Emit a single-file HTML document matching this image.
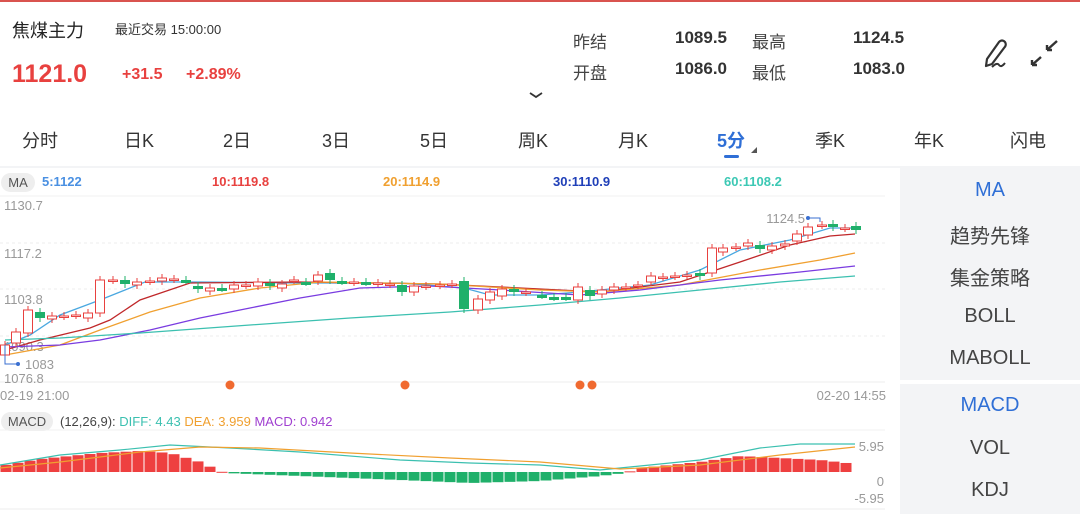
<!DOCTYPE html>
<html><head><meta charset="utf-8"><style>
*{margin:0;padding:0;box-sizing:border-box}
body{width:1080px;height:514px;overflow:hidden;background:#fff;font-family:"Liberation Sans","Noto Sans CJK SC",sans-serif;position:relative;color:#333}
.a{position:absolute;white-space:nowrap}
.r{color:#e8413f}
.b{font-weight:bold}
.tab{position:absolute;top:127px;font-size:18px;color:#333;transform:translateX(-50%)}
.side{position:absolute;left:900px;width:180px;text-align:center;font-size:20px;color:#444}
</style></head><body>
<div class="a" style="left:0;top:0;width:1080px;height:2px;background:#d9534f"></div>
<div class="a" style="left:12px;top:17px;font-size:18px;color:#222">焦煤主力</div>
<div class="a" style="left:115px;top:19px;font-size:13px;color:#333">最近交易 15:00:00</div>
<div class="a r b" style="left:12px;top:60px;font-size:25px">1121.0</div>
<div class="a r b" style="left:122px;top:66px;font-size:16px">+31.5</div>
<div class="a r b" style="left:186px;top:66px;font-size:16px">+2.89%</div>
<div class="a" style="left:573px;top:28px;font-size:17px;color:#444">昨结</div>
<div class="a b" style="left:675px;top:28px;font-size:17px;color:#333">1089.5</div>
<div class="a" style="left:752px;top:28px;font-size:17px;color:#444">最高</div>
<div class="a b" style="left:853px;top:28px;font-size:17px;color:#333">1124.5</div>
<div class="a" style="left:573px;top:59px;font-size:17px;color:#444">开盘</div>
<div class="a b" style="left:675px;top:59px;font-size:17px;color:#333">1086.0</div>
<div class="a" style="left:752px;top:59px;font-size:17px;color:#444">最低</div>
<div class="a b" style="left:853px;top:59px;font-size:17px;color:#333">1083.0</div>
<svg class="a" style="left:975px;top:35px" width="90" height="40">
<path d="M12 24 L24 7 Q27 4 30 7 Q32 10 29 13 L17 29 L11 31 Z" fill="none" stroke="#333" stroke-width="2.2" stroke-linejoin="round"/>
<path d="M17 32 Q22 27 24 30 Q26 33 30 28" fill="none" stroke="#333" stroke-width="2"/>
<path d="M57 30 L66 22 M57 30 L57 25 M57 30 L62 30" stroke="#333" stroke-width="2.4" fill="none"/>
<path d="M82 6 L72 15 M72 15 L72 10 M72 15 L77 15" stroke="#333" stroke-width="2.4" fill="none"/>
</svg>
<svg class="a" style="left:528px;top:90px" width="16" height="10"><path d="M2 3 L8 7 L14 3" stroke="#333" stroke-width="1.8" fill="none"/></svg>
<div class="tab" style="left:40px">分时</div>
<div class="tab" style="left:139px">日K</div>
<div class="tab" style="left:237px">2日</div>
<div class="tab" style="left:336px">3日</div>
<div class="tab" style="left:434px">5日</div>
<div class="tab" style="left:533px">周K</div>
<div class="tab" style="left:633px">月K</div>
<div class="tab b" style="left:731px;color:#2f6fd6">5分</div>
<div class="a" style="left:724px;top:155px;width:15px;height:3px;border-radius:2px;background:#2f6fd6"></div>
<svg class="a" style="left:750px;top:146px" width="8" height="8"><path d="M7 1 L7 7 L1 7 Z" fill="#555"/></svg>
<div class="tab" style="left:830px">季K</div>
<div class="tab" style="left:929px">年K</div>
<div class="tab" style="left:1028px">闪电</div>
<div class="a" style="left:0;top:166px;width:1080px;height:2px;background:#f3f4f6"></div>
<div class="a" style="left:900px;top:168px;width:180px;height:346px;background:#f3f4f6"></div>
<div class="a" style="left:900px;top:380px;width:180px;height:4px;background:#fff"></div>
<div class="side" style="top:179px;color:#2f6fd6">MA</div>
<div class="side" style="top:220px">趋势先锋</div>
<div class="side" style="top:262px">集金策略</div>
<div class="side" style="top:305px">BOLL</div>
<div class="side" style="top:347px">MABOLL</div>
<div class="side" style="top:394px;color:#2f6fd6">MACD</div>
<div class="side" style="top:437px">VOL</div>
<div class="side" style="top:479px">KDJ</div>
<div class="a" style="left:1px;top:173px;width:34px;height:19px;border-radius:10px;background:#eee;font-size:13px;color:#555;text-align:center;line-height:19px">MA</div>
<div class="a b" style="left:42px;top:174px;font-size:13px;color:#4a90e2">5:1122</div>
<div class="a b" style="left:212px;top:174px;font-size:13px;color:#e8413f">10:1119.8</div>
<div class="a b" style="left:383px;top:174px;font-size:13px;color:#f0a030">20:1114.9</div>
<div class="a b" style="left:553px;top:174px;font-size:13px;color:#1f3fb8">30:1110.9</div>
<div class="a b" style="left:724px;top:174px;font-size:13px;color:#3cc8b4">60:1108.2</div>
<div class="a" style="left:1px;top:412px;width:52px;height:19px;border-radius:10px;background:#eee;font-size:13px;color:#555;text-align:center;line-height:19px">MACD</div>
<div class="a" style="left:60px;top:414px;font-size:13px;color:#444">(12,26,9): <span style="color:#3cc0b0">DIFF: 4.43</span> <span style="color:#f0a030">DEA: 3.959</span> <span style="color:#a040d0">MACD: 0.942</span></div>
<svg id="c" class="a" style="left:0;top:195px" width="890" height="319"></svg>
<script>
var s=document.getElementById('c'),o=195,h='';
function L(x1,y1,x2,y2,c,w,d){h+='<line x1="'+x1+'" y1="'+(y1-o)+'" x2="'+x2+'" y2="'+(y2-o)+'" stroke="'+c+'" stroke-width="'+(w||1)+'"'+(d?' stroke-dasharray="'+d+'"':'')+'/>';}
function T(x,y,t,a){h+='<text x="'+x+'" y="'+(y-o)+'" font-size="13" fill="#999" font-family="Liberation Sans" '+(a?'text-anchor="end"':'')+'>'+t+'</text>';}
function P(p,c,w){h+='<polyline fill="none" stroke="'+c+'" stroke-width="'+(w||1.3)+'" points="'+p.map(function(q){return q[0]+','+(q[1]-o)}).join(' ')+'"/>';}
[243,289,336].forEach(function(y){L(0,y,885,y,'#ececec',1,'3,3')});
L(0,196,885,196,'#f2f2f2');L(0,382,885,382,'#eee');L(0,430,885,430,'#f2f2f2');L(0,509,885,509,'#eee');
T(4,210,'1130.7');T(4,258,'1117.2');T(4,304,'1103.8');T(4,351,'1090.3');T(4,383,'1076.8');
P([[5,345],[30,335],[60,315],[100,300],[125,290],[145,282],[200,282],[300,283],[400,283],[440,286],[464,288],[490,295],[540,295],[580,292],[600,290],[650,285],[700,270],[740,250],[790,240],[830,228],[855,228]],'#4aa8e0');
P([[5,350],[40,340],[90,328],[110,320],[140,300],[190,283],[300,282],[440,284],[500,287],[560,290],[600,292],[680,282],[740,262],[790,245],[830,236],[855,234]],'#c0282a');
P([[5,355],[60,345],[100,330],[150,312],[200,298],[260,288],[320,282],[440,284],[540,290],[600,292],[680,285],[760,270],[820,260],[855,253]],'#f0a030');
P([[5,347],[60,345],[100,340],[150,330],[200,318],[250,308],[300,298],[360,288],[430,286],[500,290],[580,295],[640,290],[720,280],[800,272],[855,266]],'#7a3ce0');
P([[5,340],[60,338],[140,333],[250,325],[350,318],[450,312],[540,305],[620,298],[700,290],[780,282],[855,276]],'#3cc0b0');
var K=[[5,345,355,'r'],[16,332,343,'r'],[28,310,333,'r'],[40,312,318,'g'],[52,316,319,'r'],[64,316,316,'r'],[76,315,315,'r'],[88,313,318,'r'],[100,280,313,'r'],[113,280,280,'r'],[125,280,284,'g'],[137,282,285,'r'],[150,281,281,'r'],[162,278,281,'r'],[174,279,279,'r'],[186,280,280,'g'],[198,286,289,'g'],[210,288,291,'r'],[222,288,288,'g'],[234,285,289,'r'],[246,285,285,'r'],[258,282,286,'r'],[270,283,286,'g'],[282,284,288,'r'],[294,280,280,'r'],[306,282,282,'g'],[318,275,281,'r'],[330,273,280,'g'],[342,281,281,'g'],[354,282,282,'r'],[366,282,282,'g'],[378,283,283,'r'],[390,284,284,'r'],[402,285,292,'g'],[414,286,292,'r'],[426,286,286,'r'],[440,285,285,'r'],[452,284,284,'r'],[464,281,309,'g'],[478,299,310,'r'],[490,292,300,'r'],[502,289,296,'r'],[514,289,292,'g'],[526,292,292,'r'],[542,295,295,'g'],[554,297,297,'g'],[566,297,297,'g'],[578,287,300,'r'],[590,290,296,'g'],[602,290,294,'r'],[614,287,290,'r'],[626,287,287,'r'],[638,285,285,'r'],[651,276,282,'r'],[663,277,277,'r'],[675,276,276,'r'],[687,275,275,'r'],[700,273,276,'g'],[712,248,273,'r'],[723,248,252,'r'],[736,247,247,'r'],[748,243,246,'r'],[760,245,249,'g'],[772,246,250,'r'],[785,244,246,'r'],[797,234,241,'r'],[808,227,235,'r'],[822,225,225,'r'],[833,224,227,'g'],[845,228,228,'r'],[856,226,230,'g']];
K.forEach(function(k){var c=k[3]=='r'?'#e8413f':'#1fb06a';L(k[0],k[1]-4,k[0],k[2]+4,c,1);
var hh=Math.max(k[2]-k[1],1.5);if(k[3]=='r')h+='<rect x="'+(k[0]-4.5)+'" y="'+(k[1]-o)+'" width="9" height="'+hh+'" fill="#fff" stroke="'+c+'"/>';else h+='<rect x="'+(k[0]-5)+'" y="'+(k[1]-o)+'" width="10" height="'+Math.max(hh,3)+'" fill="'+c+'"/>';});
P([[5,345],[5,364],[18,364]],'#3a6fd0',1);h+='<circle cx="18" cy="'+(364-o)+'" r="2" fill="#3a6fd0"/>';T(25,369,'1083');
P([[808,218],[820,218],[820,222]],'#3a6fd0',1);h+='<circle cx="808" cy="'+(218-o)+'" r="2" fill="#3a6fd0"/>';T(805,223,'1124.5',1);
[230,405,580,592].forEach(function(x){h+='<circle cx="'+x+'" cy="'+(385-o)+'" r="4.5" fill="#f06a30"/>';});
T(0,400,'02-19 21:00');T(886,400,'02-20 14:55',1);
T(884,451,'5.95',1);T(884,486,'0',1);T(884,503,'-5.95',1);
var kp=[[5,7],[40,13],[100,19],[140,21],[170,19],[200,10],[215,3],[225,-1],[300,-4],[400,-8],[470,-11],[540,-9],[600,-4],[625,-1],[640,4],[700,10],[740,16],[780,14],[820,12],[855,8]];
function v(x){for(var i=1;i<kp.length;i++)if(x<=kp[i][0]){var a=kp[i-1],b=kp[i];return a[1]+(b[1]-a[1])*(x-a[0])/(b[0]-a[0]);}return 8;}
for(var x=6;x<=856;x+=12){var val=v(x),y0=472;if(val>=0)h+='<rect x="'+(x-5.5)+'" y="'+(y0-val-o)+'" width="11" height="'+Math.max(val,1)+'" fill="#ee4040"/>';else h+='<rect x="'+(x-5.5)+'" y="'+(y0-o)+'" width="11" height="'+(-val)+'" fill="#1fb06a"/>';}
P([[0,465],[60,455],[120,450],[170,445],[230,448],[300,452],[400,460],[470,463],[540,465],[600,470],[700,460],[760,448],[800,444],[855,444]],'#3cc0b0',1.2);
P([[0,468],[60,462],[140,452],[200,447],[260,448],[350,453],[450,458],[540,462],[620,469],[700,465],[780,455],[855,447]],'#f0a030',1.2);
s.innerHTML=h;
</script>
</body></html>
